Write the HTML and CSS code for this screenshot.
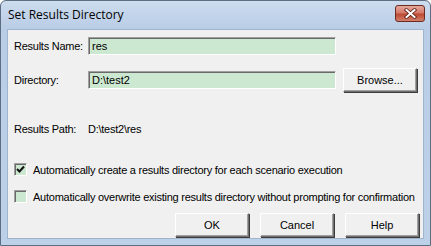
FILE: index.html
```html
<!DOCTYPE html>
<html lang="en">
<head>
  <meta charset="UTF-8">
  <title>Set Results Directory</title>
  <link rel="stylesheet" href="styles.css">
</head>
<body>
  <div class="window">
    <div class="titlebar">
      <span class="title">Set Results Directory</span>
      <button class="close-btn">
        <svg width="13" height="11" viewBox="0 0 13 11">
          <path d="M2.5 2 L10.5 9 M10.5 2 L2.5 9" stroke="#5a1a10" stroke-width="3.6" stroke-linecap="square"/>
          <path d="M2.5 2 L10.5 9 M10.5 2 L2.5 9" stroke="#fff" stroke-width="2" stroke-linecap="square"/>
        </svg>
      </button>
    </div>
    <div class="client">
      <div class="form-row">
        <label class="field-label">Results Name:</label>
        <input class="field" type="text" value="res">
      </div>
      <div class="form-row dir-row">
        <label class="field-label">Directory:</label>
        <input class="field" type="text" value="D:\test2">
        <button class="btn browse-btn">Browse...</button>
      </div>
      <div class="path-row">
        <span class="field-label">Results Path:</span>
        <span>D:\test2\res</span>
      </div>
      <div class="check-row">
        <span class="checkbox">
          <svg width="9" height="9" viewBox="0 0 9 9"><path d="M1 4 L3.5 6.5 L8 1.5" stroke="#111" stroke-width="2" fill="none"/></svg>
        </span>
        <span>Automatically create a results directory for each scenario execution</span>
      </div>
      <div class="check-row second">
        <span class="checkbox"></span>
        <span>Automatically overwrite existing results directory without prompting for confirmation</span>
      </div>
      <div class="button-row">
        <button class="btn">OK</button>
        <button class="btn">Cancel</button>
        <button class="btn">Help</button>
      </div>
    </div>
  </div>
</body>
</html>
```

FILE: styles.css
```css
body {
  margin: 0;
  background: #fff;
  font-family: 'Liberation Sans', Arial, sans-serif;
}
.window {
  width: 431px;
  height: 246px;
  box-sizing: border-box;
  border: 1px solid #5d6d82;
  border-radius: 6px 6px 0 0;
  background: linear-gradient(#cddcee, #b9cde6 28px, #bcd0e8);
  display: flex;
  flex-direction: column;
  overflow: hidden;
}
.titlebar {
  height: 28px;
  flex-shrink: 0;
  display: flex;
  justify-content: space-between;
  padding: 0 5px 0 7px;
}
.title {
  font-family: 'Open Sans', 'DejaVu Sans', sans-serif;
  font-size: 12px;
  line-height: 16px;
  color: #000;
  margin-top: 6px;
}
.close-btn {
  width: 30px;
  height: 17px;
  margin-top: 4px;
  border: 1px solid #6b2a22;
  border-radius: 3px;
  background: linear-gradient(#e6a99b, #d4796a 45%, #bd4a33 55%, #d3806a);
  display: flex;
  align-items: center;
  justify-content: center;
  padding: 0;
}
.client {
  flex: 1;
  margin: 0 6px 6px 6px;
  background: #f0f0f0;
  border: 1px solid #9fb4cf;
  padding: 7px 4px 0 6px;
  font-size: 11px;
  letter-spacing: -0.25px;
  color: #000;
  display: flex;
  flex-direction: column;
}
.form-row {
  display: flex;
  align-items: center;
  height: 18px;
}
.dir-row {
  height: 26px;
  margin-top: 12px;
}
.field-label {
  width: 74px;
  flex-shrink: 0;
}
.field {
  width: 248px;
  height: 18px;
  box-sizing: border-box;
  margin: 0;
  padding: 0 3px;
  border: 1px solid #fff;
  border-top-color: #a0a0a0;
  border-left-color: #a0a0a0;
  box-shadow: inset 1px 1px 0 #696969;
  background: #cde8d0;
  font: inherit;
  color: #000;
}
.btn {
  width: 74px;
  height: 24px;
  box-sizing: border-box;
  padding: 0;
  border: 1px solid #6f6f6f;
  border-top-color: #fff;
  border-left-color: #fff;
  box-shadow: 1px 1px 0 #3c3c3c, inset -1px -1px 0 #a0a0a0;
  background: #f0f0f0;
  font: inherit;
  color: #000;
}
.browse-btn {
  margin-left: 7px;
}
.path-row {
  display: flex;
  line-height: 14px;
  margin-top: 29px;
}
.check-row {
  display: flex;
  align-items: center;
  gap: 6px;
  height: 13px;
  margin-top: 27px;
}
.check-row.second {
  margin-top: 14px;
}
.checkbox {
  width: 13px;
  height: 13px;
  flex-shrink: 0;
  box-sizing: border-box;
  border: 1px solid #fff;
  border-top-color: #a0a0a0;
  border-left-color: #a0a0a0;
  box-shadow: inset 1px 1px 0 #696969;
  background: #cde8d0;
  display: flex;
  align-items: center;
  justify-content: center;
}
.button-row {
  display: flex;
  justify-content: flex-end;
  gap: 11px;
  margin-top: 10px;
}
```
